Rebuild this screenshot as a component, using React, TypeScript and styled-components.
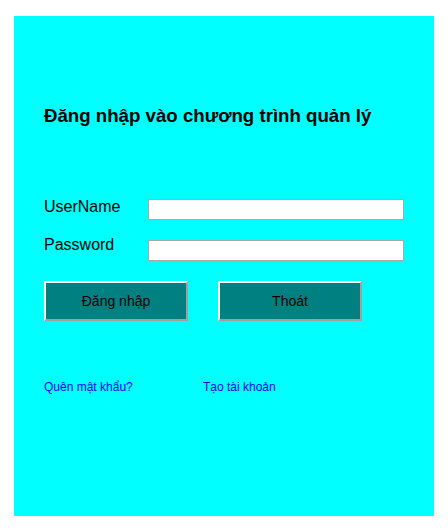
import React from "react";
import styled, { createGlobalStyle } from "styled-components";

const GlobalStyle = createGlobalStyle`
  html, body {
    margin: 0;
    padding: 0;
    background: #ffffff;
  }
  body {
    font-family: "Liberation Sans", Arial, sans-serif;
  }
`;

const Page = styled.div`
  padding: 16px 14px 14px 14px;
`;

const Panel = styled.div`
  box-sizing: border-box;
  width: 420px;
  height: 500px;
  background: #00ffff;
  padding: 88px 30px 0 30px;
  display: flex;
  flex-direction: column;
`;

const Title = styled.h1`
  margin: 0;
  font-size: 18.67px;
  line-height: 23px;
  font-weight: bold;
  color: #000000;
`;

const Form = styled.div`
  margin-top: 71px;
  display: flex;
  flex-direction: column;
  gap: 16px;
`;

const Row = styled.div`
  display: flex;
  align-items: flex-start;
`;

const Label = styled.label`
  width: 104px;
  font-size: 16px;
  line-height: 18px;
  color: #000000;
`;

const Input = styled.input<{ $offset: number }>`
  box-sizing: border-box;
  width: 256px;
  height: 21px;
  margin: ${(p) => p.$offset}px 0 0 0;
  padding: 0 3px;
  border: 1px solid #a9a9a9;
  background: #ffffff;
  font-family: "Liberation Sans", Arial, sans-serif;
  font-size: 13px;
  outline: none;
`;

const Buttons = styled.div`
  margin-top: 20px;
  display: flex;
  gap: 30px;
`;

const Button = styled.button`
  box-sizing: border-box;
  width: 144px;
  height: 40px;
  padding: 0;
  background: #008080;
  border-style: solid;
  border-width: 2px;
  border-color: #ffffff #a0a0a0 #a0a0a0 #ffffff;
  color: #000000;
  font-family: "Liberation Sans", Arial, sans-serif;
  font-size: 14px;
  cursor: pointer;
`;

const Links = styled.div`
  margin-top: 59px;
  display: flex;
`;

const Link = styled.a<{ $width?: number }>`
  ${(p) => (p.$width ? `width: ${p.$width}px;` : "")}
  font-size: 12px;
  line-height: 14px;
  color: #0000ff;
  text-decoration: none;
  cursor: pointer;
`;

export default function App() {
  return (
    <>
      <GlobalStyle />
      <Page>
        <Panel>
          <Title>Đăng nhập vào chương trình quản lý</Title>
          <Form>
            <Row>
              <Label htmlFor="username">UserName</Label>
              <Input id="username" type="text" $offset={1} />
            </Row>
            <Row>
              <Label htmlFor="password">Password</Label>
              <Input id="password" type="password" $offset={4} />
            </Row>
          </Form>
          <Buttons>
            <Button>Đăng nhập</Button>
            <Button>Thoát</Button>
          </Buttons>
          <Links>
            <Link $width={159}>Quên mật khẩu?</Link>
            <Link>Tạo tài khoản</Link>
          </Links>
        </Panel>
      </Page>
    </>
  );
}
